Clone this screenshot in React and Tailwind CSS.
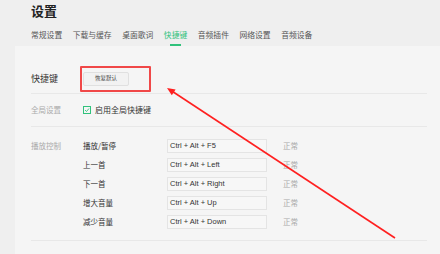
const tabs = ['常规设置', '下载与缓存', '桌面歌词', '快捷键', '音频插件', '网络设置', '音频设备']

const shortcuts = [
  { name: '播放/暂停', keys: 'Ctrl + Alt + F5' },
  { name: '上一首', keys: 'Ctrl + Alt + Left' },
  { name: '下一首', keys: 'Ctrl + Alt + Right' },
  { name: '增大音量', keys: 'Ctrl + Alt + Up' },
  { name: '减少音量', keys: 'Ctrl + Alt + Down' },
]

export default function App() {
  return (
    <div className="relative w-[440px] h-[254px] overflow-hidden bg-[#efefef] font-['Noto_Sans_CJK_SC',sans-serif]">
      {/* Header */}
      <div className="pl-[31px] pt-[3px] h-[46px]">
        <h1 className="text-[13px] leading-[16px] font-bold text-[#222]">设置</h1>
        <div className="flex gap-[10.5px] mt-[9px] h-[18px] text-[7.8px] leading-[14px]">
          {tabs.map(t => (
            <div key={t} className={`relative h-[18px] ${t === '快捷键' ? 'text-[#31c27c]' : 'text-[#555]'}`}>
              {t}
              {t === '快捷键' && (
                <div className="absolute left-[6px] top-[16px] w-[11px] h-[2px] bg-[#31c27c]" />
              )}
            </div>
          ))}
        </div>
      </div>

      {/* Panel */}
      <div className="ml-[15px] bg-[#f5f5f5] pl-[16px] pr-[13px] pt-[18px] h-[208px]">
        <div className="flex items-center h-[30px] border-b border-[#e8e8e8]">
          <div className="w-[52px] text-[9px] text-[#333]">快捷键</div>
          <button type="button" className="w-[46px] h-[14px] border border-[#e0e0e0] bg-[#f2f2f2] rounded-[2px] text-[5.5px] text-[#444] leading-none">
            恢复默认
          </button>
        </div>

        <div className="flex items-center h-[33px] border-b border-[#e8e8e8]">
          <div className="w-[52px] text-[7.5px] text-[#aaa]">全局设置</div>
          <div className="flex items-center gap-[4px]">
            <div className="w-[8px] h-[8px] border border-[#31c27c] flex items-center justify-center">
              <svg width="6" height="6" viewBox="0 0 6 6">
                <path d="M1 3 L2.5 4.5 L5 1.5" fill="none" stroke="#31c27c" strokeWidth="0.9" />
              </svg>
            </div>
            <span className="text-[8px] text-[#333]">启用全局快捷键</span>
          </div>
        </div>

        <div className="flex pt-[12px] pb-[11px] border-b border-[#e8e8e8]">
          <div className="w-[52px] text-[7.5px] text-[#aaa] leading-[14px]">播放控制</div>
          <div className="flex flex-col gap-[5px]">
            {shortcuts.map(s => (
              <div key={s.name} className="flex items-center h-[14px]">
                <div className="w-[84px] text-[7.5px] text-[#333]">{s.name}</div>
                <div className="w-[100px] h-[14px] border border-[#e4e4e4] bg-[#f7f7f7] flex items-center pl-[2px] text-[7.5px] text-[#333] font-['Liberation_Sans',sans-serif]">
                  {s.keys}
                </div>
                <div className="ml-[16px] text-[7.5px] text-[#aaa]">正常</div>
              </div>
            ))}
          </div>
        </div>
      </div>

      {/* Annotation */}
      <div className="absolute left-[80px] top-[66px] w-[71px] h-[26px] border-2 border-[#f04848] rounded-[1px]" />
      <svg className="absolute left-0 top-0" width="440" height="254" viewBox="0 0 440 254">
        <line x1="395" y1="238" x2="171" y2="90.5" stroke="#ff2020" strokeWidth="1.6" />
        <polygon points="167,88 171.8,95.3 175.6,89.5" fill="#ff2020" />
      </svg>
    </div>
  )
}
